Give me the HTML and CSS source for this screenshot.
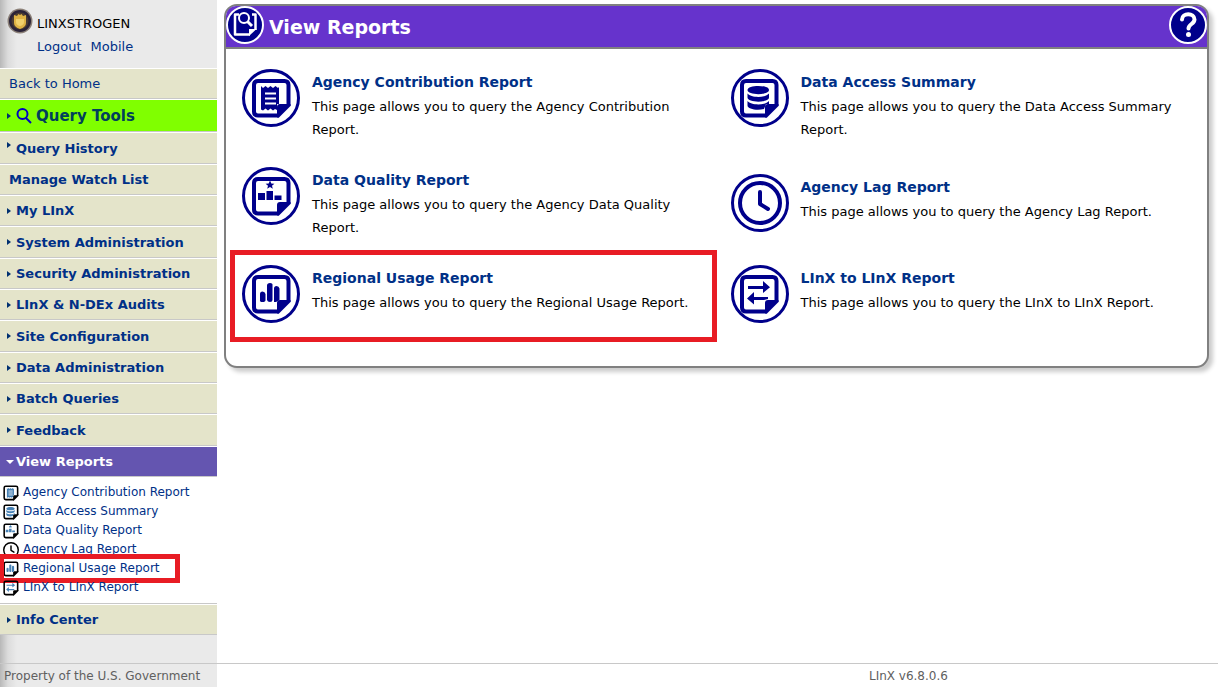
FILE: index.html
```html
<!DOCTYPE html>
<html lang="en">
<head>
<meta charset="utf-8">
<meta name="viewport" content="width=device-width, initial-scale=1">
<title>View Reports</title>
<link rel="stylesheet" href="styles.css">
</head>
<body>
<svg class="sprite" aria-hidden="true">
  <symbol id="page" viewBox="10 9 41 41">
    <path d="M38 46.500H17Q13 46.500 13 42.500V16Q13 12 17 12H43.500Q47.500 12 47.500 16V37" fill="none" stroke="currentColor" stroke-width="4"/>
    <path d="M36 48.500V38Q36 35 39 35H49.500V37L38 48.500Z" fill="currentColor"/>
  </symbol>
  <symbol id="receipt" viewBox="10 9 41 41">
    <use href="#page" x="10" y="9" width="41" height="41"/>
    <path class="mark" d="M20 17l2 2 2.500-2 2.500 2 2.500-2 2.500 2 2.500-2 2.500 2 1-1V35H36V41l-2-1-2 1.500-2.500-2-2.500 2-2.500-2-2.500 2-2-1Z"/>
    <path class="gap" d="M24 24.500H35M24 29.500H35M24 34.500H35"/>
  </symbol>
  <symbol id="database" viewBox="10 9 41 41">
    <use href="#page" x="10" y="9" width="41" height="41"/>
    <path class="mark" d="M18.500 21C18.500 15.500 40 15.500 40 21S18.500 26.500 18.500 21ZM18.500 24.500C22 29 36.500 29 40 24.500V28.500C40 34 18.500 34 18.500 28.500ZM18.500 32C22 36.500 36.500 36.500 40 32V35H37L35 40C28 42 18.500 40 18.500 36.500Z"/>
  </symbol>
  <symbol id="quality" viewBox="10 9 41 41">
    <use href="#page" x="10" y="9" width="41" height="41"/>
    <path class="mark" d="M17 26H24V33H17ZM25.500 24H32V33H25.500ZM33.500 28.500H40.500V33H33.500ZM29 13.500l1.300 2.900 3.100.3-2.400 2 .8 3-2.800-1.600-2.800 1.600.8-3-2.400-2 3.100-.3Z"/>
  </symbol>
  <symbol id="bars" viewBox="10 9 41 41">
    <use href="#page" x="10" y="9" width="41" height="41"/>
    <path class="mark" d="M19 35V29Q19 26.500 21.500 26.500T24.500 29V35Q24.500 37 21.500 37T19 35ZM26 35V20.500Q26 18 29 18T31.500 20.500V35Q31.500 37 29 37T26 35ZM33 35V23.500Q33 21 35.500 21T38.500 23.500V35L35 37H33Z"/>
  </symbol>
  <symbol id="clock" viewBox="7 7 44 44">
    <circle cx="29" cy="29" r="20" fill="none" stroke="currentColor" stroke-width="4"/>
    <path d="M29 18V30L37 35" fill="none" stroke="currentColor" stroke-width="4" stroke-linecap="round" stroke-linejoin="round"/>
  </symbol>
  <symbol id="exchange" viewBox="10 9 41 41">
    <use href="#page" x="10" y="9" width="41" height="41"/>
    <path class="mark" d="M19 21H34V16L41 22.200 34 28V24H19ZM39 32H25V27L18 33.500 25 39.500V35H35L39 34Z"/>
  </symbol>
</svg>

<div class="layout">
  <aside class="sidebar">
    <div class="account">
      <svg class="badge" viewBox="0 0 26 26" aria-hidden="true">
        <circle cx="13" cy="13" r="12.500" fill="#8b8078"/>
        <circle cx="13" cy="13" r="11" fill="#2b2338"/>
        <circle cx="13" cy="13" r="8.500" fill="#4b3c32"/>
        <path d="M7 7l3 1 1.500-2L13 7l1.500-1L16 8l3-1v8q0 4-6 6-6-2-6-6Z" fill="#dfb345"/>
        <path d="M9 11h8v3q0 3-4 4-4-1-4-4Z" fill="#f1d06c"/>
      </svg>
      <div>
        <div class="user">LINXSTROGEN</div>
        <div class="account-links"><a href="#logout">Logout</a><a href="#mobile">Mobile</a></div>
      </div>
    </div>
    <nav class="menu" aria-label="Main">
      <a class="row plain" href="#home">Back to Home</a>
      <a class="row query" href="#query"><i class="caret"></i>
        <svg class="lens" viewBox="0 0 16 16" aria-hidden="true"><circle cx="6.500" cy="6" r="5" fill="none" stroke="#0000c0" stroke-width="2"/><path d="M10 10l5 5" stroke="#0000c0" stroke-width="2"/></svg>Query Tools</a>
      <a class="row" href="#history"><i class="caret high"></i>Query History</a>
      <a class="row" href="#watch">Manage Watch List</a>
      <a class="row" href="#my"><i class="caret"></i>My LInX</a>
      <a class="row" href="#system"><i class="caret"></i>System Administration</a>
      <a class="row" href="#security"><i class="caret"></i>Security Administration</a>
      <a class="row" href="#audits"><i class="caret"></i>LInX &amp; N-DEx Audits</a>
      <a class="row" href="#site"><i class="caret"></i>Site Configuration</a>
      <a class="row" href="#data"><i class="caret"></i>Data Administration</a>
      <a class="row" href="#batch"><i class="caret"></i>Batch Queries</a>
      <a class="row" href="#feedback"><i class="caret"></i>Feedback</a>
      <a class="row current" href="#reports"><i class="caret down"></i>View Reports</a>
      <ul class="submenu">
        <li><svg><use href="#receipt"/></svg><a href="#contribution">Agency Contribution Report</a></li>
        <li><svg><use href="#database"/></svg><a href="#access">Data Access Summary</a></li>
        <li><svg><use href="#quality"/></svg><a href="#data-quality">Data Quality Report</a></li>
        <li><svg><use href="#clock"/></svg><a href="#lag">Agency Lag Report</a></li>
        <li class="marked"><svg><use href="#bars"/></svg><a href="#usage">Regional Usage Report</a></li>
        <li><svg><use href="#exchange"/></svg><a href="#linx">LInX to LInX Report</a></li>
      </ul>
      <a class="row" href="#info"><i class="caret"></i>Info Center</a>
    </nav>
  </aside>

  <main class="content">
    <section class="panel">
      <header class="panel-head">
        <svg class="disc" viewBox="0 0 38 38" aria-hidden="true">
          <circle cx="19" cy="19" r="18" fill="#00008b" stroke="#fff" stroke-width="2"/>
          <path d="M13 8.500H9V28.500H24M29.500 24V8.500H26" fill="none" stroke="#fff" stroke-width="2.500" stroke-linejoin="round"/>
          <path d="M23 30V23H30.500Z" fill="#fff"/>
          <circle cx="18" cy="12" r="5" fill="none" stroke="#fff" stroke-width="2"/>
          <path d="M21.500 15.500L26 20" stroke="#fff" stroke-width="3"/>
        </svg>
        <h1>View Reports</h1>
        <button class="help" type="button" aria-label="Help">
          <svg class="disc" viewBox="0 0 38 38" aria-hidden="true">
            <circle cx="19" cy="19" r="18" fill="#00008b" stroke="#fff" stroke-width="2"/>
            <path d="M13 13.500C13 6.500 25.500 6.500 25.500 13.500C25.500 18 19.500 18 19.500 22.500" fill="none" stroke="#fff" stroke-width="4" stroke-linecap="round"/>
            <circle cx="19.500" cy="28.500" r="2.500" fill="#fff"/>
          </svg>
        </button>
      </header>
      <div class="reports">
        <article class="report"><span class="ring"><svg><use href="#receipt"/></svg></span><div><h2><a href="#contribution">Agency Contribution Report</a></h2><p>This page allows you to query the Agency Contribution Report.</p></div></article>
        <article class="report"><span class="ring"><svg><use href="#database"/></svg></span><div><h2><a href="#access">Data Access Summary</a></h2><p>This page allows you to query the Data Access Summary Report.</p></div></article>
        <article class="report"><span class="ring"><svg><use href="#quality"/></svg></span><div><h2><a href="#data-quality">Data Quality Report</a></h2><p>This page allows you to query the Agency Data Quality Report.</p></div></article>
        <article class="report"><span class="ring"><svg class="wide"><use href="#clock"/></svg></span><div><h2><a href="#lag">Agency Lag Report</a></h2><p>This page allows you to query the Agency Lag Report.</p></div></article>
        <article class="report marked"><span class="ring"><svg><use href="#bars"/></svg></span><div><h2><a href="#usage">Regional Usage Report</a></h2><p>This page allows you to query the Regional Usage Report.</p></div></article>
        <article class="report"><span class="ring"><svg><use href="#exchange"/></svg></span><div><h2><a href="#linx">LInX to LInX Report</a></h2><p>This page allows you to query the LInX to LInX Report.</p></div></article>
      </div>
    </section>
  </main>
</div>

<footer class="footer">
  <span>Property of the U.S. Government</span>
  <span class="version">LInX v6.8.0.6</span>
</footer>
</body>
</html>
```

FILE: styles.css
```css
* { box-sizing: border-box; }

body {
  margin: 0;
  min-height: 100vh;
  display: flex;
  flex-direction: column;
  font: 13px/23px Verdana, "DejaVu Sans", sans-serif;
  color: #000;
  background: linear-gradient(to right, #b8b8b8, #dcdcdc 8px, #eaeaea 17px, #eaeaea 217px, #fff 217px);
}

a { color: #003087; text-decoration: none; }
h1, h2, p, ul { margin: 0; padding: 0; }
.sprite { position: absolute; width: 0; height: 0; }
.mark { fill: var(--mark, currentColor); }
.gap { fill: none; stroke: #fff; stroke-width: 2; }

.layout { flex: 1; display: flex; }
.sidebar { width: 217px; flex: none; }

.account { height: 68px; display: flex; gap: 4px; padding: 8px 7px 0; }
.badge { width: 26px; height: 26px; flex: none; }
.user { padding-top: 4px; }
.account-links { display: flex; gap: 9px; }

.row {
  display: flex;
  align-items: center;
  height: 31px;
  padding: 0 9px;
  border-top: 1px solid #fff;
  border-bottom: 1px solid #c8c8c8;
  background: #e4e4ca;
  font-weight: bold;
}
.row:nth-child(3n):not(:last-child) { height: 32px; }
.row.plain { font-weight: normal; }
.row.query { height: 33px; padding-top: 1px; font-size: 15px; color: #00405c; background: #80ff00; }
.row.current { color: #fff; background: #6455b0; }
.row:has(.caret) { padding-left: 7px; }
.lens { width: 16px; height: 16px; margin-right: 4px; }

.caret {
  width: 4px;
  margin-right: 5px;
  border: solid transparent;
  border-width: 3px 0 3px 4px;
  border-left-color: #003070;
}
.caret.high { margin-bottom: 6px; }
.caret.down { width: 8px; margin: 0 2px 0 -1px; border-width: 4px 4px 0; border-top-color: #fff; border-left-color: transparent; }

.submenu {
  list-style: none;
  padding: 6px 3px;
  border-bottom: 1px solid #c8c8c8;
  background: #fff;
  font-size: 12px;
  line-height: 19px;
  --mark: #4580b4;
}
.submenu li { position: relative; display: flex; align-items: center; gap: 4px; }
.submenu svg { width: 16px; height: 16px; color: #000; }
.submenu .marked::after {
  content: "";
  position: absolute;
  inset: -5px 34px -5px -4px;
  border: 5px solid #e81c24;
}

.content { flex: 1; padding: 4px 9px 20px 7px; }
.panel {
  border: 2px solid #808080;
  border-radius: 13px;
  background: #fff;
  box-shadow: 4px 4px 4px #ccc;
}
.panel-head {
  display: flex;
  align-items: center;
  gap: 5px;
  height: 43px;
  padding-bottom: 3px;
  border-bottom: 2px solid #808080;
  border-radius: 10px 10px 0 0;
  background: #6633cc;
  color: #fff;
}
.panel-head h1 { flex: 1; font-size: 19px; line-height: 24px; padding-top: 3px; }
.disc { display: block; width: 38px; height: 38px; }
.help { padding: 0; border: 0; background: none; }

.reports {
  display: grid;
  grid-template-columns: 1fr 1fr;
  align-items: center;
  gap: 26px 12px;
  padding: 20px 0 43px 16px;
}
.report { position: relative; display: flex; gap: 12px; padding-right: 16px; }
.report h2 { padding-top: 1px; font-size: 14px; line-height: 25px; }
.ring {
  display: grid;
  place-items: center;
  flex: none;
  width: 58px;
  height: 58px;
  border: 3px solid #00008b;
  border-radius: 50%;
  color: #00008b;
}
.ring svg { width: 41px; height: 41px; }
.ring .wide { width: 44px; height: 44px; }
.report.marked::after {
  content: "";
  position: absolute;
  inset: -15px 2px -19px -12px;
  border: 5px solid #e81c24;
}

.footer {
  display: flex;
  justify-content: space-between;
  height: 24px;
  padding-left: 4px;
  border-top: 1px solid #c8c8c8;
  font-size: 12px;
  line-height: 25px;
  color: #606060;
}
.version { width: 51%; text-align: center; }
```
